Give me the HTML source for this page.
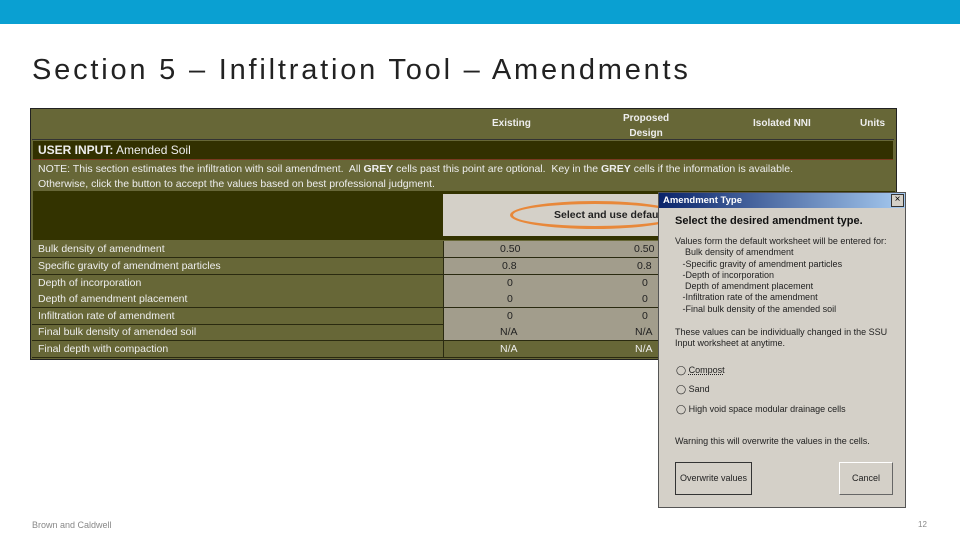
<!DOCTYPE html><html><head><style>
body{margin:0;width:960px;height:540px;position:relative;background:#fff;font-family:"Liberation Sans",sans-serif;overflow:hidden}
.a{position:absolute}
.t{color:#eee;font-size:10.5px;white-space:nowrap}
.row{position:absolute;left:32px;width:864px;height:16px;border-bottom:1px solid #2a2a10}
.g{position:absolute;left:411px;width:217px;top:0;height:16px;background:#a29d8c}
.v{position:absolute;color:#222;font-size:10.5px;top:2px}
.d{font-size:9px;color:#222}
</style></head><body>
<div class="a" style="left:0;top:0;width:960px;height:24px;background:#0aa0d2"></div>
<div class="a" style="left:32px;top:54px;font-size:29px;letter-spacing:2.8px;color:#222;white-space:nowrap">Section 5 – Infiltration Tool – Amendments</div>
<div class="a" style="left:30px;top:108px;width:867px;height:252px;background:#676737;border:1px solid #222;box-sizing:border-box"></div>
<div class="a t" style="left:492px;top:118px;font-weight:bold;font-size:10px">Existing</div>
<div class="a t" style="left:623px;top:111px;font-weight:bold;font-size:10px;text-align:center;line-height:15px">Proposed<br>Design</div>
<div class="a t" style="left:753px;top:118px;font-weight:bold;font-size:10px">Isolated NNI</div>
<div class="a t" style="left:860px;top:118px;font-weight:bold;font-size:10px">Units</div>
<div class="a" style="left:32px;top:139px;width:862px;height:1px;background:#333"></div>
<div class="a" style="left:33px;top:141px;width:860px;height:18px;background:#323000;border-bottom:1px solid #7a3a20"></div>
<div class="a t" style="left:38px;top:143px;font-size:12px"><b>USER INPUT:</b> Amended Soil</div>
<div class="a t" style="left:38px;top:162px;font-size:10.5px;line-height:15px">NOTE: This section estimates the infiltration with soil amendment.&nbsp; All <b>GREY</b> cells past this point are optional.&nbsp; Key in the <b>GREY</b> cells if the information is available.<br>Otherwise, click the button to accept the values based on best professional judgment.</div>
<div class="a" style="left:33px;top:191px;width:862px;height:49px;background:#333300"></div>
<div class="a" style="left:443px;top:194px;width:230px;height:42px;background:#d4d0c8"></div>
<div class="a" style="left:510px;top:201px;width:170px;height:28px;border:3px solid #e8883a;border-radius:50%;box-sizing:border-box"></div>
<div class="a" style="left:554px;top:209px;font-size:10.5px;color:#222;font-weight:bold">Select and use defaul</div>
<div class="row" style="top:241px"><div class="g"></div><span class="t a" style="left:6px;top:2px">Bulk density of amendment</span><span class="v" style="left:468px">0.50</span><span class="v" style="left:602px">0.50</span></div>
<div class="row" style="top:258px"><div class="g"></div><span class="t a" style="left:6px;top:2px">Specific gravity of amendment particles</span><span class="v" style="left:470px">0.8</span><span class="v" style="left:605px">0.8</span></div>
<div class="row" style="top:275px;border:0"><div class="g"></div><span class="t a" style="left:6px;top:2px">Depth of incorporation</span><span class="v" style="left:475px">0</span><span class="v" style="left:610px">0</span></div>
<div class="row" style="top:291px"><div class="g"></div><span class="t a" style="left:6px;top:2px">Depth of  amendment placement</span><span class="v" style="left:475px">0</span><span class="v" style="left:610px">0</span></div>
<div class="row" style="top:308px"><div class="g"></div><span class="t a" style="left:6px;top:2px">Infiltration rate of amendment</span><span class="v" style="left:475px">0</span><span class="v" style="left:610px">0</span></div>
<div class="row" style="top:324px"><div class="g"></div><span class="t a" style="left:6px;top:2px">Final bulk density of amended soil</span><span class="v" style="left:468px">N/A</span><span class="v" style="left:603px">N/A</span></div>
<div class="row" style="top:341px"><span class="t a" style="left:6px;top:2px">Final depth with compaction</span><span class="v" style="left:468px;color:#eee">N/A</span><span class="v" style="left:603px;color:#eee">N/A</span></div>
<div class="a" style="left:443px;top:241px;width:1px;height:116px;background:#2a2a10"></div>
<div class="a" style="left:658px;top:192px;width:248px;height:316px;background:#d4d0c8;border:1px solid #555;box-sizing:border-box"></div>
<div class="a" style="left:659px;top:193px;width:246px;height:15px;background:linear-gradient(90deg,#0a246a,#a6caf0)"></div>
<div class="a" style="left:663px;top:195px;color:#fff;font-size:9.5px;font-weight:bold">Amendment Type</div>
<div class="a" style="left:891px;top:194px;width:11px;height:11px;background:#d4d0c8;border:1px solid #333;font-size:10px;line-height:10px;text-align:center">×</div>
<div class="a" style="left:675px;top:215px;font-size:11px;font-weight:bold;color:#111">Select the desired amendment type.</div>
<div class="a d" style="left:675px;top:236px;line-height:11.3px">Values form the default worksheet will be entered for:<br>&nbsp;&nbsp;&nbsp;&nbsp;Bulk density of amendment<br>&nbsp;&nbsp;&nbsp;-Specific gravity of amendment particles<br>&nbsp;&nbsp;&nbsp;-Depth of incorporation<br>&nbsp;&nbsp;&nbsp;&nbsp;Depth of amendment placement<br>&nbsp;&nbsp;&nbsp;-Infiltration rate of the amendment<br>&nbsp;&nbsp;&nbsp;-Final bulk density of the amended soil</div>
<div class="a d" style="left:675px;top:327px;line-height:11.3px">These values can be individually changed in the SSU<br>Input worksheet at anytime.</div>
<div class="a d" style="left:676px;top:365px">◯ <u style="text-decoration-style:dotted">Compost</u></div>
<div class="a d" style="left:676px;top:384px">◯ Sand</div>
<div class="a d" style="left:676px;top:404px">◯ High void space modular drainage cells</div>
<div class="a d" style="left:675px;top:436px">Warning this will overwrite the values in the cells.</div>
<div class="a d" style="left:675px;top:462px;width:77px;height:33px;border:1px solid #333;box-sizing:border-box;text-align:center;line-height:31px">Overwrite values</div>
<div class="a d" style="left:839px;top:462px;width:54px;height:33px;border:1px solid #666;border-top-color:#fff;border-left-color:#fff;box-sizing:border-box;text-align:center;line-height:31px">Cancel</div>
<div class="a" style="left:32px;top:520px;font-size:9px;color:#888">Brown and Caldwell</div>
<div class="a" style="left:918px;top:520px;font-size:8px;color:#888">12</div>
</body></html>
